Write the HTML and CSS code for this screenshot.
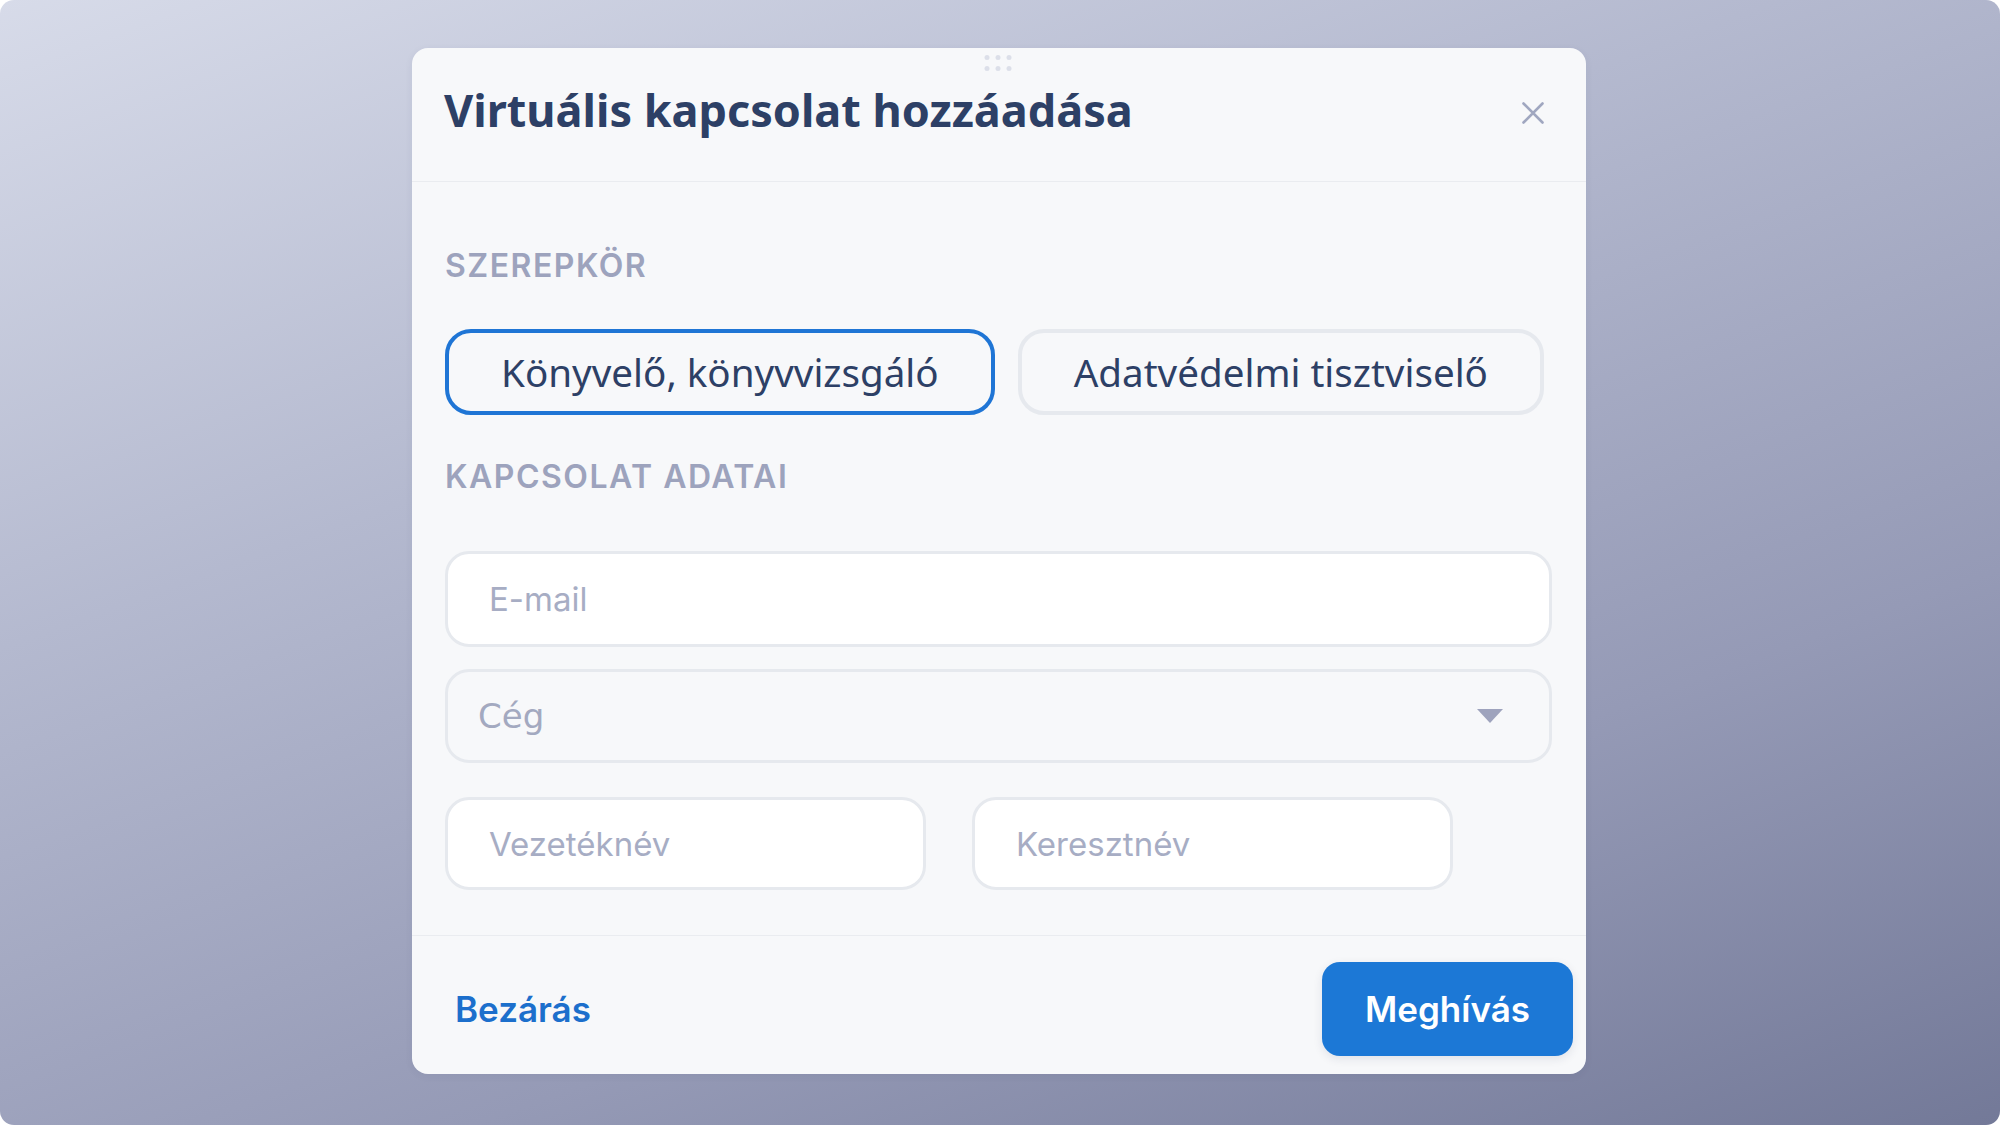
FILE: index.html
```html
<!DOCTYPE html>
<html lang="hu">
<head>
  <meta charset="UTF-8">
  <meta name="viewport" content="width=device-width, initial-scale=1.0">
  <title>Virtuális kapcsolat hozzáadása</title>
  <link rel="stylesheet" href="styles.css">
</head>
<body>
  <div class="screen">
    <div class="modal">
      <div class="drag-handle">
        <span></span><span></span><span></span>
        <span></span><span></span><span></span>
      </div>

      <div class="modal-header">
        <h1>Virtuális kapcsolat hozzáadása</h1>
        <button class="close-btn" aria-label="Bezárás">
          <svg width="22" height="22" viewBox="0 0 22 22">
            <path d="M1.5 1.5 L20.5 20.5 M20.5 1.5 L1.5 20.5" stroke="currentColor" stroke-width="2.6" stroke-linecap="round" fill="none"/>
          </svg>
        </button>
      </div>

      <div class="modal-body">
        <div class="section-label">Szerepkör</div>
        <div class="role-options">
          <button class="role-btn active">Könyvelő, könyvvizsgáló</button>
          <button class="role-btn">Adatvédelmi tisztviselő</button>
        </div>

        <div class="section-label details-label">Kapcsolat adatai</div>

        <input type="email" class="field field-email" placeholder="E-mail">

        <div class="field field-select">
          <span>Cég</span>
          <svg width="26" height="14" viewBox="0 0 26 14">
            <path d="M0 0 H26 L13 14 Z" fill="currentColor"/>
          </svg>
        </div>

        <div class="name-row">
          <input type="text" class="field field-name" placeholder="Vezetéknév">
          <input type="text" class="field field-name" placeholder="Keresztnév">
        </div>
      </div>

      <div class="modal-footer">
        <button class="btn-link">Bezárás</button>
        <button class="btn-primary">Meghívás</button>
      </div>
    </div>
  </div>
</body>
</html>
```

FILE: styles.css
```css
:root {
  --primary-color: #1c78d6;
  --link-color: #1c6fcc;
  --modal-bg: #f7f8fa;
  --title-color: #2d4066;
  --label-color: #9da3bd;
  --placeholder-color: #a7adc4;
  --border-color: #e6e9ee;
  --divider-color: #eaecf0;
}

html, body {
  margin: 0;
  padding: 0;
  background-color: #ffffff;
}

.screen {
  width: 2000px;
  height: 1125px;
  box-sizing: border-box;
  padding: 48px 2px 0 0;
  border-radius: 14px;
  background: linear-gradient(160deg, #d7dbe9 0%, #b4b9cf 35%, #959ab6 70%, #737998 100%);
  display: flex;
  align-items: flex-start;
  justify-content: center;
}

.modal {
  position: relative;
  width: 1174px;
  height: 1026px;
  box-sizing: border-box;
  background-color: var(--modal-bg);
  border-radius: 16px;
  display: flex;
  flex-direction: column;
  box-shadow: 0 2px 8px rgba(40, 50, 90, 0.06);
}

.drag-handle {
  position: absolute;
  top: 7px;
  left: 50%;
  transform: translateX(calc(-50% - 1px));
  display: grid;
  grid-template-columns: repeat(3, 5px);
  gap: 6px;
}

.drag-handle span {
  width: 5px;
  height: 5px;
  border-radius: 50%;
  background-color: #dcdfe9;
}

.modal-header {
  display: flex;
  align-items: center;
  justify-content: space-between;
  padding: 32px 42px 41px 32px;
  border-bottom: 1px solid var(--divider-color);
}

.modal-header h1 {
  margin: 0;
  font-family: "Noto Sans", sans-serif;
  font-size: 45px;
  line-height: 60px;
  font-weight: 700;
  color: var(--title-color);
}

.close-btn {
  background: none;
  border: none;
  padding: 0;
  margin-top: 6px;
  width: 22px;
  height: 22px;
  color: #a0a7c0;
  cursor: pointer;
  display: flex;
}

.modal-body {
  flex: 1;
  padding: 64px 34px 0 33px;
}

.section-label {
  font-family: "Inter", sans-serif;
  font-size: 32px;
  line-height: 40px;
  font-weight: 600;
  letter-spacing: 1.5px;
  text-transform: uppercase;
  color: var(--label-color);
}

.role-options {
  display: flex;
  gap: 23px;
  margin-top: 43px;
}

.role-btn {
  flex: none;
  height: 86px;
  padding: 0 52px;
  box-sizing: border-box;
  border: 4px solid var(--border-color);
  border-radius: 26px;
  background-color: var(--modal-bg);
  font-family: "Noto Sans", sans-serif;
  font-size: 38.6px;
  white-space: nowrap;
  color: var(--title-color);
  cursor: pointer;
}

.role-btn.active {
  border-color: #1f75d5;
}

.details-label {
  margin-top: 42px;
}

.field {
  display: block;
  width: 100%;
  box-sizing: border-box;
  border: 3px solid var(--border-color);
  border-radius: 24px;
  background-color: #ffffff;
  padding: 0 41px;
  font-family: "Inter", sans-serif;
  font-size: 33px;
  color: var(--title-color);
  outline: none;
}

.field::placeholder {
  color: var(--placeholder-color);
}

.field-email {
  height: 96px;
  margin-top: 54px;
}

.field-select {
  height: 94px;
  margin-top: 22px;
  padding: 0 46px 0 30px;
  background-color: var(--modal-bg);
  display: flex;
  align-items: center;
  justify-content: space-between;
  font-family: "DejaVu Sans", sans-serif;
  font-size: 34px;
  color: #a3a9c0;
}

.field-select svg {
  color: #9ea3bd;
}

.name-row {
  display: flex;
  gap: 46px;
  margin-top: 34px;
}

.field-name {
  width: 481px;
  height: 93px;
}

.modal-footer {
  height: 139px;
  box-sizing: border-box;
  border-top: 1px solid var(--divider-color);
  display: flex;
  align-items: flex-start;
  justify-content: space-between;
  padding: 26px 13px 0 33px;
}

.btn-link {
  background: none;
  border: none;
  padding: 0 10px;
  height: 94px;
  font-family: "Inter", sans-serif;
  font-size: 35px;
  font-weight: 600;
  color: var(--link-color);
  cursor: pointer;
}

.btn-primary {
  width: 251px;
  height: 94px;
  border: none;
  border-radius: 18px;
  background-color: var(--primary-color);
  color: #ffffff;
  font-family: "Inter", sans-serif;
  font-size: 35px;
  font-weight: 600;
  cursor: pointer;
  box-shadow: 0 3px 10px rgba(30, 40, 80, 0.10);
}
```
